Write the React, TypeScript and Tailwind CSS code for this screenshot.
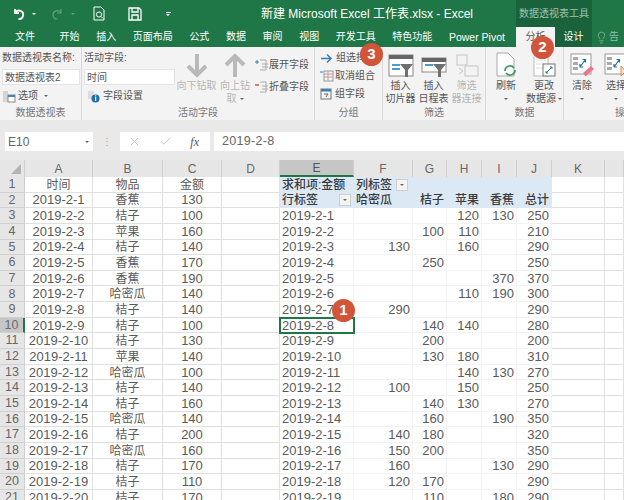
import { X, Check, Lightbulb } from "lucide-react";

const cols = ["A", "B", "C", "D", "E", "F", "G", "H", "I", "J", "K", ""];

const source: [string, string, string][] = [
  ["时间", "物品", "金额"],
  ["2019-2-1", "香蕉", "130"],
  ["2019-2-2", "桔子", "100"],
  ["2019-2-3", "苹果", "160"],
  ["2019-2-4", "桔子", "140"],
  ["2019-2-5", "香蕉", "170"],
  ["2019-2-6", "香蕉", "190"],
  ["2019-2-7", "哈密瓜", "140"],
  ["2019-2-8", "桔子", "140"],
  ["2019-2-9", "桔子", "100"],
  ["2019-2-10", "桔子", "130"],
  ["2019-2-11", "苹果", "140"],
  ["2019-2-12", "哈密瓜", "100"],
  ["2019-2-13", "桔子", "140"],
  ["2019-2-14", "桔子", "160"],
  ["2019-2-15", "哈密瓜", "140"],
  ["2019-2-16", "桔子", "200"],
  ["2019-2-17", "哈密瓜", "160"],
  ["2019-2-18", "桔子", "170"],
  ["2019-2-19", "桔子", "110"],
  ["2019-2-20", "桔子", "170"],
];

// pivot body starts on sheet row 3
const pivot: string[][] = [
  ["2019-2-1", "", "", "120", "130", "250"],
  ["2019-2-2", "", "100", "110", "", "210"],
  ["2019-2-3", "130", "", "160", "", "290"],
  ["2019-2-4", "", "250", "", "", "250"],
  ["2019-2-5", "", "", "", "370", "370"],
  ["2019-2-6", "", "", "110", "190", "300"],
  ["2019-2-7", "290", "", "", "", "290"],
  ["2019-2-8", "", "140", "140", "", "280"],
  ["2019-2-9", "", "200", "", "", "200"],
  ["2019-2-10", "", "130", "180", "", "310"],
  ["2019-2-11", "", "", "140", "130", "270"],
  ["2019-2-12", "100", "", "150", "", "250"],
  ["2019-2-13", "", "140", "130", "", "270"],
  ["2019-2-14", "", "160", "", "190", "350"],
  ["2019-2-15", "140", "180", "", "", "320"],
  ["2019-2-16", "150", "200", "", "", "350"],
  ["2019-2-17", "160", "", "", "130", "290"],
  ["2019-2-18", "120", "170", "", "", "290"],
  ["2019-2-19", "", "110", "", "180", "290"],
];

function Badge({ n, className }: { n: number; className: string }) {
  return (
    <div className={`absolute z-10 w-[23px] h-[23px] rounded-full bg-[#d2553a] text-white text-[15px] font-bold flex items-center justify-center ${className}`}>
      {n}
    </div>
  );
}

function Caret() {
  return <span className="inline-block w-0 h-0 border-x-[2px] border-x-transparent border-t-[2px] border-t-[#666]" />;
}

function Filter() {
  return (
    <span className="shrink-0 w-[12px] h-[12px] bg-[#f4f4f4] border border-[#cfcfcf] flex items-center justify-center">
      <Caret />
    </span>
  );
}

function Cell({ children, className = "" }: { children?: React.ReactNode; className?: string }) {
  return <div className={`flex items-center border-r border-b whitespace-nowrap overflow-hidden leading-none ${className}`}>{children}</div>;
}

const plain = "bg-white border-[#e0e0e0] text-[#5a5a5a]";
const body = "bg-white border-[#f3f3f3] text-[#5a5a5a] text-[13px]";
const head = "bg-[#dce9f5] border-[#dce9f5] text-[#3a3a3a] text-[12px] font-medium pt-[1px]";

function Group({ label, className, children }: { label: string; className: string; children: React.ReactNode }) {
  return (
    <div className={`shrink-0 h-full border-r border-[#d8d8d8] flex flex-col ${className}`}>
      <div className="flex-1 flex min-h-0">{children}</div>
      <div className="h-[12px] text-center text-[10px] leading-[12px] text-[#777] mb-[1px]">{label}</div>
    </div>
  );
}

function BigButton({ icon, lines, width, dim }: { icon: React.ReactNode; lines: React.ReactNode[]; width: string; dim?: boolean }) {
  return (
    <div className={`${width} shrink-0 flex flex-col items-center pt-[4px] text-[10px] leading-[13px] ${dim ? "text-[#b5b5b5]" : "text-[#555]"}`}>
      <div className="h-[27px] flex items-end justify-center mb-[1px]">{icon}</div>
      {lines.map((l, i) => (
        <div key={i} className="whitespace-nowrap h-[13px] flex items-center">{l}</div>
      ))}
    </div>
  );
}

function SlicerIcon({ wide }: { wide?: boolean }) {
  return (
    <svg width="26" height="24" viewBox="0 0 26 24">
      <rect x="1" y={wide ? 4 : 1} width="24" height={wide ? 14 : 21} fill="#fff" stroke="#8a8a8a" />
      <rect x="1" y={wide ? 4 : 1} width="24" height="4" fill="#666" />
      <rect x="4" y="10" width="8" height="2" fill="#4a9bd1" />
      <rect x="4" y="14" width="8" height="2" fill={wide ? "#fff" : "#4a9bd1"} />
      <path d="M12 10h13l-5 6v7h-3v-7z" fill="#6f6f6f" />
    </svg>
  );
}

function ClearIcon({ cursor }: { cursor?: boolean }) {
  return (
    <svg width="24" height="25" viewBox="0 0 24 25">
      <rect x="1" y="1" width="20" height="20" fill="#fff" stroke="#999" />
      <rect x="3" y="4" width="5" height="3" fill="#aaa" />
      <rect x="3" y="9" width="5" height="3" fill="#aaa" />
      <rect x="3" y="14" width="5" height="3" fill="#aaa" />
      <path d="M10 14l5-7M12.5 6.5h3v3M10 11v3h3" stroke="#2a6f9e" strokeWidth="1.2" fill="none" />
      {cursor ? <path d="M17 13v10l3-3h3z" fill="#f7e3d0" stroke="#d98a5a" /> : <path d="M13 20l8-7 3 3-8 7h-1z" fill="#e9788c" />}
    </svg>
  );
}

function Tri({ color }: { color: string }) {
  return <span className={`block w-0 h-0 border-x-[2px] border-x-transparent border-t-[2px] ${color}`} />;
}

export default function App() {
  return (
    <div className="w-[624px] h-[500px] overflow-hidden relative bg-white font-['Liberation_Sans','Noto_Sans_CJK_SC',sans-serif] flex flex-col">
      {/* Title bar */}
      <div className="h-[27px] shrink-0 bg-[#1f7748] flex text-white">
        <div className="w-[516px] shrink-0 flex items-center">
          <svg className="ml-[12px]" width="14" height="14" viewBox="0 0 14 14" fill="none" stroke="#fff" strokeWidth="1.8">
            <path d="M3 2v4h4" />
            <path d="M3.2 6A4.2 4.2 0 1 1 6.5 12" />
          </svg>
          <span className="ml-[6px]"><Tri color="border-t-white" /></span>
          <svg className="ml-[14px]" width="14" height="14" viewBox="0 0 14 14" fill="none" stroke="#5fa27f" strokeWidth="1.2">
            <path d="M11 2v4H7" />
            <path d="M11 6A4.2 4.2 0 1 0 7.5 12" />
          </svg>
          <span className="ml-[7px]"><Tri color="border-t-[#5fa27f]" /></span>
          <svg className="ml-[17px]" width="14" height="15" viewBox="0 0 14 15" fill="none" stroke="#fff" strokeWidth="1">
            <path d="M2 1h7l3 3v10H2z" />
            <circle cx="7" cy="8.5" r="2.6" />
            <path d="M9 10.5l2 2" />
          </svg>
          <svg className="ml-[22px]" width="14" height="14" viewBox="0 0 14 14" fill="none" stroke="#fff" strokeWidth="1.3">
            <path d="M1 1h10l2 2v10H1z" />
            <path d="M4 1v4h6V1M4 13V8h6v5" />
          </svg>
          <span className="ml-[24px]">
            <span className="block w-[5px] border-t border-white mb-[1px]" />
            <Tri color="border-t-white" />
          </span>
          <div className="ml-[90px] text-[12px] leading-none whitespace-nowrap">新建 Microsoft Excel 工作表.xlsx - Excel</div>
        </div>
        <div className="w-[76px] bg-[#19623c] text-[#9cc4ad] text-[10px] text-center leading-[27px] whitespace-nowrap">数据透视表工具</div>
      </div>

      {/* Tabs */}
      <div className="h-[20px] shrink-0 bg-[#1f7748] flex text-[10px] leading-[20px] text-white whitespace-nowrap">
        <div className="w-[516px] shrink-0 flex pl-[15px] gap-[16.6px]">
          <span>文件</span>
          <span className="ml-[8px]">开始</span>
          <span>插入</span>
          <span>页面布局</span>
          <span>公式</span>
          <span>数据</span>
          <span>审阅</span>
          <span>视图</span>
          <span>开发工具</span>
          <span>特色功能</span>
          <span className="text-[10.5px]">Power Pivot</span>
        </div>
        <div className="w-[39px] bg-[#f3f3f3] text-[#555] text-center">分析</div>
        <div className="w-[37px] bg-[#19623c] text-center">设计</div>
        <span className="ml-[3px] flex items-center gap-[1px] text-[#8fbfa5]"><Lightbulb size={13} strokeWidth={1.3} />告</span>
      </div>

      {/* Ribbon */}
      <div className="h-[73px] shrink-0 bg-[#f3f3f3] flex text-[10px] text-[#555]">
        <Group label="数据透视表" className="w-[82px]">
          <div className="pl-[2px] pt-[4px] w-full">
            <div className="leading-[14px] whitespace-nowrap">数据透视表名称:</div>
            <div className="mt-[4px] w-[78px] h-[16px] bg-white border border-[#e4e4e4] leading-[15px] pl-[2px]">数据透视表2</div>
            <div className="mt-[4px] flex items-center gap-[2px] leading-[14px]">
              <svg width="14" height="13" viewBox="0 0 14 13">
                <rect x="1" y="1" width="5" height="11" fill="#d5d5d5" />
                <rect x="6" y="5" width="7" height="7" fill="#fff" stroke="#888" />
                <rect x="6" y="5" width="7" height="2" fill="#4a85b5" />
              </svg>
              选项
              <span className="ml-[4px] flex"><Caret /></span>
            </div>
          </div>
        </Group>

        <Group label="活动字段" className="w-[233px]">
          <div className="w-[94px] pl-[2px] pt-[4px] shrink-0">
            <div className="leading-[14px]">活动字段:</div>
            <div className="mt-[4px] w-[91px] h-[16px] bg-white border border-[#e4e4e4] leading-[15px] pl-[2px]">时间</div>
            <div className="mt-[4px] flex items-center gap-[3px] leading-[14px] pl-[3px]">
              <svg width="13" height="13" viewBox="0 0 13 13">
                <rect x="1" y="1" width="6" height="8" fill="#ddd" />
                <circle cx="8.5" cy="8.5" r="4" fill="#1f6fb0" />
                <rect x="8" y="7" width="1.2" height="4" fill="#fff" />
                <rect x="8" y="5.4" width="1.2" height="1" fill="#fff" />
              </svg>
              字段设置
            </div>
          </div>
          <BigButton
            width="w-[41px]"
            dim
            lines={["向下钻取"]}
            icon={
              <svg width="24" height="25" viewBox="0 0 24 25" fill="none" stroke="#b9b9b9" strokeWidth="4">
                <path d="M12 1v21M3 13l9 9 9-9" />
              </svg>
            }
          />
          <BigButton
            width="w-[36px]"
            dim
            lines={["向上钻", <span className="flex items-center gap-[3px]">取 <Caret /></span>]}
            icon={
              <svg width="24" height="25" viewBox="0 0 24 25" fill="none" stroke="#b9b9b9" strokeWidth="4">
                <path d="M12 24V3M3 12l9-9 9 9" />
              </svg>
            }
          />
          <div className="flex-1 pt-[11px] pl-[2px] flex flex-col gap-[8px] leading-[14px]">
            <div className="flex items-center gap-[1px] whitespace-nowrap">
              <svg width="13" height="12" viewBox="0 0 13 12" fill="none">
                <path d="M0 3h4M2 1v4" stroke="#3b7fb5" />
                <path d="M5 1h6v10H5M7 5h6M7 8h6" stroke="#aaa" />
              </svg>
              展开字段
            </div>
            <div className="flex items-center gap-[1px] whitespace-nowrap">
              <svg width="13" height="12" viewBox="0 0 13 12" fill="none">
                <path d="M0 4h4" stroke="#c9502f" strokeWidth="1.4" />
                <path d="M5 1h6v10H5M7 5h6M7 8h6" stroke="#aaa" />
              </svg>
              折叠字段
            </div>
          </div>
        </Group>

        <Group label="分组" className="w-[68px]">
          <div className="pl-[5px] pt-[4px] flex flex-col gap-[4px] leading-[14px]">
            <div className="flex items-center gap-[3px] whitespace-nowrap">
              <svg width="13" height="11" viewBox="0 0 13 11" fill="none" stroke="#3b7fb5" strokeWidth="1.6">
                <path d="M1 5.5h10M7 1.5l4 4-4 4" />
              </svg>
              组选择
            </div>
            <div className="flex items-center gap-[1px] whitespace-nowrap">
              <svg width="14" height="12" viewBox="0 0 14 12" fill="none">
                <rect x="4" y="1" width="9" height="10" stroke="#999" />
                <path d="M4 4h9M4 7h9M8 1v10" stroke="#c99" />
                <path d="M0 2h3" stroke="#3b7fb5" />
              </svg>
              取消组合
            </div>
            <div className="flex items-center gap-[3px] whitespace-nowrap">
              <svg width="12" height="12" viewBox="0 0 12 12" fill="none">
                <rect x="1" y="1" width="10" height="10" stroke="#777" />
                <rect x="1" y="1" width="10" height="2.5" fill="#3b7fb5" />
                <path d="M4 6h4l-2 3" stroke="#666" />
              </svg>
              组字段
            </div>
          </div>
        </Group>

        <Group label="筛选" className="w-[103px]">
          <div className="flex pl-[1px]">
            <BigButton width="w-[33px]" icon={<SlicerIcon />} lines={["插入", "切片器"]} />
            <BigButton width="w-[33px]" icon={<SlicerIcon wide />} lines={["插入", "日程表"]} />
            <BigButton
              width="w-[33px]"
              dim
              lines={["筛选", "器连接"]}
              icon={
                <svg width="24" height="24" viewBox="0 0 24 24" fill="none" stroke="#c4c4c4">
                  <rect x="2" y="1" width="10" height="10" />
                  <rect x="10" y="12" width="13" height="10" />
                  <path d="M4 14l4 3-4 3" />
                </svg>
              }
            />
          </div>
        </Group>

        <Group label="数据" className="w-[78px]">
          <div className="flex pl-[2px]">
            <BigButton
              width="w-[36px]"
              lines={["刷新", <Caret />]}
              icon={
                <svg width="24" height="26" viewBox="0 0 24 26" fill="none">
                  <path d="M3 1h11l6 6v17H3z" fill="#fff" stroke="#aaa" />
                  <path d="M11 19a5 5 0 0 1 9-3M21 18a5 5 0 0 1-9 3" stroke="#3f9a5f" strokeWidth="1.8" />
                </svg>
              }
            />
            <BigButton
              width="w-[40px]"
              lines={["更改", <span className="flex items-center gap-[2px]">数据源<Caret /></span>]}
              icon={
                <svg width="24" height="26" viewBox="0 0 24 26" fill="none">
                  <rect x="2" y="3" width="14" height="21" fill="#fff" stroke="#bbb" />
                  <path d="M4 8h10M4 12h10M4 16h10" stroke="#ddd" />
                  <rect x="11" y="12" width="12" height="12" fill="#fff" stroke="#777" />
                  <path d="M14 21l6-6M18 15h2v2M14 19v2h2" stroke="#2a6f9e" />
                </svg>
              }
            />
          </div>
        </Group>

        <div className="flex-1 flex flex-col min-w-0 overflow-hidden">
          <div className="flex-1 flex pl-[1px]">
            <BigButton width="w-[34px]" icon={<ClearIcon />} lines={["清除", <Caret />]} />
            <BigButton width="w-[34px]" icon={<ClearIcon cursor />} lines={["选择", <Caret />]} />
          </div>
          <div className="h-[12px] mb-[1px] text-[10px] leading-[12px] text-[#777] pl-[51px] whitespace-nowrap">操作</div>
        </div>
      </div>

      {/* Formula bar */}
      <div className="h-[40px] shrink-0 bg-[#e9e9e9] flex items-start pt-[12px] text-[12px] text-[#666]">
        <div className="ml-[5px] w-[88px] h-[19px] bg-white flex items-center justify-between pl-[3px] pr-[4px] leading-none">
          E10
          <Caret />
        </div>
        <div className="w-[27px] h-[19px] flex items-center justify-center text-[#aaa] text-[10px] leading-none">⋮</div>
        <div className="w-[90px] h-[19px] bg-white flex items-center justify-between pl-[8px] pr-[11px] text-[#b5b5b5]">
          <X size={13} strokeWidth={1.4} />
          <Check size={13} strokeWidth={1.4} />
          <span className="font-['Liberation_Serif',serif] italic text-[12px] text-[#555]">fx</span>
        </div>
        <div className="ml-[4px] flex-1 h-[19px] bg-white flex items-center pl-[8px] text-[12.5px] tracking-[0.3px] leading-none">2019-2-8</div>
      </div>

      {/* Sheet */}
      <div className="grid grid-cols-[25px_68px_70px_59px_58px_74px_59px_34px_35px_35px_35px_53px_19px] grid-rows-[17px] auto-rows-[15.65px] bg-[#e6e6e6]">
        <div className="bg-[#e6e6e6] border-r border-[#cfcfcf] flex items-end justify-end pr-[3px] pb-[3px]">
          <span className="w-0 h-0 border-l-[10px] border-l-transparent border-b-[10px] border-b-[#b4b4b4]" />
        </div>
        {cols.map((c, i) => (
          <div
            key={i}
            className={`flex items-center justify-center text-[12px] border-r border-[#cfcfcf] ${
              c === "E" ? "bg-[#c6c6c6] border-b-2 border-b-[#1f7748] text-[#555]" : "bg-[#e6e6e6] text-[#666]"
            }`}
          >
            {c}
          </div>
        ))}

        {source.map((row, i) => {
          const n = i + 1;
          const values = i >= 2 ? pivot[i - 2] : null;
          return (
            <div key={n} className="contents">
              <div
                className={`flex items-center justify-center text-[12.5px] leading-none border-b border-[#d0d0d0] ${
                  n === 10 ? "bg-[#c6c6c6] border-r-2 border-r-[#1f7748] text-[#6a6a6a]" : "bg-[#e6e6e6] border-r border-r-[#cfcfcf] text-[#666]"
                }`}
              >
                {n}
              </div>
              <Cell className={`${plain} justify-center ${n === 1 ? "text-[12px] pt-[1px]" : "text-[13px]"}`}>{row[0]}</Cell>
              <Cell className={`${plain} justify-center text-[12px] pt-[1px]`}>{row[1]}</Cell>
              <Cell className={`${plain} justify-center ${n === 1 ? "text-[12px] pt-[1px]" : "text-[13px]"}`}>{row[2]}</Cell>
              <Cell className={plain} />
              {n === 1 && (
                <>
                  <Cell className={`${head} pl-[2px]`}>求和项:金额</Cell>
                  <Cell className={`${head} pl-[2px] gap-[4px]`}>
                    列标签
                    <Filter />
                  </Cell>
                  {[0, 1, 2, 3].map((k) => (
                    <Cell key={k} className={head} />
                  ))}
                </>
              )}
              {n === 2 && (
                <>
                  <Cell className={`${head} pl-[2px] justify-between pr-[2px]`}>
                    行标签
                    <Filter />
                  </Cell>
                  <Cell className={`${head} pl-[2px]`}>哈密瓜</Cell>
                  {["桔子", "苹果", "香蕉", "总计"].map((t) => (
                    <Cell key={t} className={`${head} justify-end pr-[2px]`}>
                      {t}
                    </Cell>
                  ))}
                </>
              )}
              {values &&
                values.map((v, k) =>
                  k === 0 ? (
                    <Cell key={k} className={`${body} pl-[2px] ${n === 10 ? "relative outline-2 -outline-offset-1 outline-[#1f7748]" : ""}`}>
                      {v}
                    </Cell>
                  ) : (
                    <Cell key={k} className={`${body} justify-end pr-[2px]`}>
                      {v}
                    </Cell>
                  )
                )}
              <Cell className={plain} />
              <Cell className={plain} />
            </div>
          );
        })}
      </div>

      <Badge n={3} className="left-[360px] top-[43px]" />
      <Badge n={2} className="left-[531px] top-[36px]" />
      <Badge n={1} className="left-[332px] top-[299px]" />
    </div>
  );
}
